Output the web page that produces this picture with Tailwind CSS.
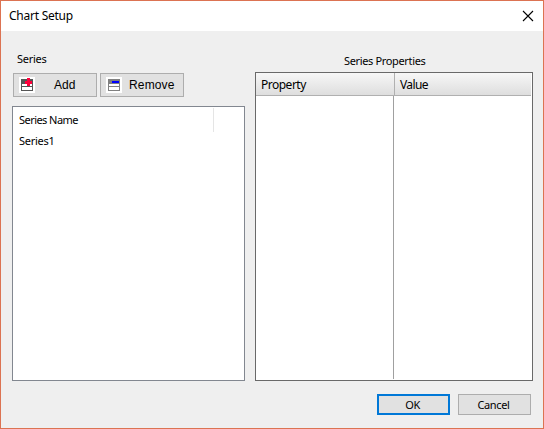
<!DOCTYPE html>
<html lang="en">
<head>
<meta charset="utf-8">
<title>Chart Setup</title>
<script src="https://cdn.jsdelivr.net/npm/@tailwindcss/browser@4"></script>
</head>
<body class="w-[544px] h-[429px] overflow-hidden font-['Noto_Sans',sans-serif] text-black">
<div class="flex h-[429px] w-[544px] flex-col border border-[#dc7352] bg-[#efefef]">
  <header class="flex h-[30px] shrink-0 items-center justify-between bg-white pl-2 pr-[9px]">
    <h1 class="text-[12px] leading-[16px] tracking-[-0.25px]">Chart Setup</h1>
    <svg class="-mt-px" width="12" height="12" viewBox="0 0 12 12" fill="none" stroke="#000" stroke-width="1.1"><path d="M1 1L11 11M11 1L1 11"/></svg>
  </header>
  <main class="flex pl-[11px]">
    <section class="w-[233px]">
      <h2 class="ml-[5px] mt-[20px] h-[16px] text-[11px] leading-[16px] tracking-[-0.25px]">Series</h2>
      <div class="ml-px mt-[6px] flex gap-[3px]">
        <button class="flex h-6 w-[84px] items-center border border-[#adadad] bg-[#e1e1e1] pl-[5px]">
          <svg width="16" height="16" viewBox="0 0 16 16" shape-rendering="crispEdges"><path fill="#fff" d="M0 0h16v16H0z"/><path fill="#555" d="M2 2h12v12H2z"/><path fill="#fff" d="M3 7h10v2H3zM3 10h10v3H3z"/><path fill="#ff003c" d="M8 1h3v3h2v3h-2v2H8V7H6V4h2z"/></svg>
          <span class="ml-[19px] font-['Liberation_Sans',sans-serif] text-[12px] leading-[16px]">Add</span>
        </button>
        <button class="flex h-6 w-[84px] items-center border border-[#adadad] bg-[#e1e1e1] pl-[5px]">
          <svg width="16" height="16" viewBox="0 0 16 16" shape-rendering="crispEdges"><path fill="#fff" d="M0 0h16v16H0z"/><path fill="#808080" d="M2 2h12v12H2z"/><path fill="#fff" d="M3 7h10v2H3zM3 10h10v3H3z"/><path fill="#00f" d="M6 4h7v2H6z"/></svg>
          <span class="ml-[7px] font-['Liberation_Sans',sans-serif] text-[12px] leading-[16px] tracking-[0.15px]">Remove</span>
        </button>
      </div>
      <div class="mt-[9px] h-[275px] border border-[#828790] bg-white pt-px text-[11px] tracking-[-0.25px]">
        <div class="flex h-6 w-[201px] items-center border-r border-[#e5e5e5] pl-[6px] leading-[16px] tracking-[-0.55px]">Series Name</div>
        <div class="mt-[1px] pl-[6px] leading-[16px]">Series1</div>
      </div>
    </section>
    <section class="ml-[10px] w-[278px]">
      <h2 class="ml-[89px] mt-[22px] h-[16px] text-[11px] leading-[16px] tracking-[-0.35px]">Series Properties</h2>
      <div class="mt-[3px] flex h-[309px] flex-col border border-[#696969] bg-white pb-px pr-px">
        <div class="flex h-[23px] shrink-0 border-b border-[#b0b0b0] bg-linear-to-b from-[#f7f7f7] to-[#dedede] text-[12px] leading-[24px]">
          <div class="h-[22px] w-[139px] border-r border-[#b0b0b0] pl-[5px] tracking-[-0.5px]">Property</div>
          <div class="h-[22px] pl-[5px] tracking-[-0.6px]">Value</div>
        </div>
        <div class="w-[138px] grow border-r border-[#a0a0a0]"></div>
      </div>
    </section>
  </main>
  <footer class="mt-[13px] flex justify-end gap-2 pr-3 text-[11px] tracking-[-0.35px]">
    <button class="h-[21px] w-[73px] border-2 border-[#0078d7] bg-[#e1e1e1] pr-[2px] leading-[17px]">OK</button>
    <button class="h-[21px] w-[73px] border border-[#adadad] bg-[#e1e1e1] pr-[2px] leading-[19px]">Cancel</button>
  </footer>
</div>
</body>
</html>
